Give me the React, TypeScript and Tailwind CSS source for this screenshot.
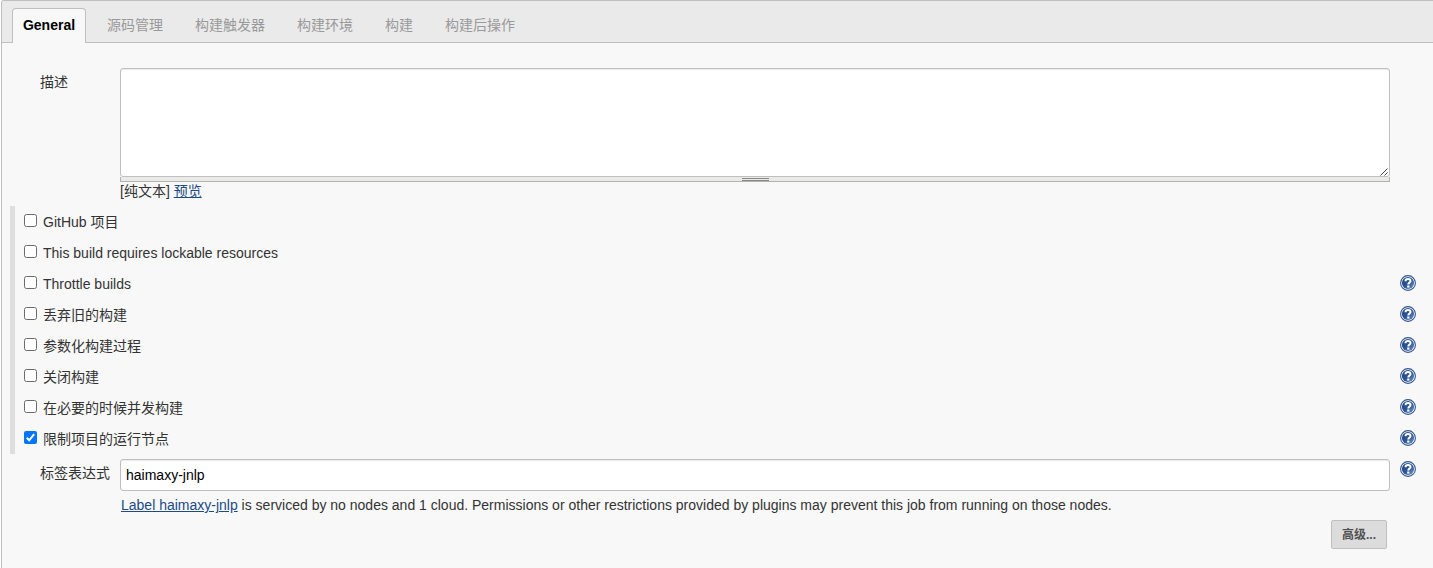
const FONT = "font-['Liberation_Sans','Noto_Sans_CJK_SC',sans-serif]";

const tabs = ["源码管理", "构建触发器", "构建环境", "构建", "构建后操作"];

const options = [
  { label: "GitHub 项目", help: false, checked: false },
  { label: "This build requires lockable resources", help: false, checked: false },
  { label: "Throttle builds", help: true, checked: false },
  { label: "丢弃旧的构建", help: true, checked: false },
  { label: "参数化构建过程", help: true, checked: false },
  { label: "关闭构建", help: true, checked: false },
  { label: "在必要的时候并发构建", help: true, checked: false },
  { label: "限制项目的运行节点", help: true, checked: true },
];

function HelpIcon() {
  return (
    <svg width="16" height="16" viewBox="0 0 16 16" className="block shrink-0">
      <defs>
        <linearGradient id="help" x1="0" y1="0" x2="1" y2="1">
          <stop offset="0" stopColor="#1f4480" />
          <stop offset="0.5" stopColor="#2d5593" />
          <stop offset="1" stopColor="#6f94c4" />
        </linearGradient>
      </defs>
      <circle cx="8" cy="8" r="7.4" fill="#fff" stroke="#2f5590" strokeWidth="1.1" />
      <circle cx="8" cy="8" r="6.1" fill="url(#help)" />
      <path d="M5.5 6.2C5.5 4.6 6.5 3.9 8 3.9c1.5 0 2.5.7 2.5 2 0 1.6-2.2 1.8-2.2 3.6" fill="none" stroke="#fff" strokeWidth="2" />
      <rect x="7.2" y="10.5" width="2.2" height="2.1" fill="#fff" />
    </svg>
  );
}

function Checkbox({ checked }: { checked: boolean }) {
  return checked ? (
    <span className="block size-[13px] shrink-0 rounded-[2px] bg-[#0075ff]">
      <svg width="13" height="13" viewBox="0 0 13 13" className="block">
        <path d="M2.8 6.8 5.2 9.3 10.2 3.2" fill="none" stroke="#fff" strokeWidth="2" />
      </svg>
    </span>
  ) : (
    <span className="block size-[13px] shrink-0 rounded-[2.5px] border border-[#6b6b6b] bg-white" />
  );
}

export default function App() {
  return (
    <div className={`${FONT} h-[568px] overflow-hidden bg-white pl-px text-sm text-[#333]`}>
      <div className="h-full rounded-tl-[3px] border-t border-l border-[#bfbfbf] bg-[#f8f8f8]">
        <div className="flex h-[42px] items-end rounded-tl-[2px] border-b border-[#bfbfbf] bg-[#eaeaea] pl-[10px]">
          <div className="-mb-px h-[35px] w-[74px] rounded-t-[4px] border border-b-0 border-[#bfbfbf] bg-[#f8f8f8] text-center leading-[33px] font-bold text-black">
            General
          </div>
          <div className="flex h-[34px] gap-8 pl-[21px] leading-[35px] text-[#999]">
            {tabs.map((t) => (
              <div key={t}>{t}</div>
            ))}
          </div>
        </div>

        <div className="flex pt-[25px] pr-[43px] pl-[38px]">
          <div className="w-20 pt-1 leading-5">描述</div>
          <div className="flex-1">
            <div className="flex h-[109px] items-end justify-end rounded-[3px] border border-[#bfbfbf] bg-white shadow-[inset_0_1px_1px_rgba(0,0,0,0.08)]">
              <svg width="9" height="9" viewBox="0 0 9 9">
                <path d="M0.5 8.5 7.5 1.5M4.5 8.5 7.5 5.5" stroke="#444" strokeWidth="1" fill="none" />
              </svg>
            </div>
            <div className="flex h-[5px] flex-col items-center gap-px border border-t-0 border-[#b3b3ad] bg-[#eaeaea] pt-px">
              <div className="h-px w-[27px] shrink-0 bg-[#888]" />
              <div className="h-px w-[27px] shrink-0 bg-[#888]" />
            </div>
            <div className="h-6 leading-[19px]">
              [纯文本] <a className="text-[#204a87] underline">预览</a>
            </div>
          </div>
        </div>

        <div className="ml-2 border-l-[5px] border-[#dedede] pr-[17px] pl-[9px]">
          {options.map((o) => (
            <div key={o.label} className="flex h-[31px] items-start pt-2">
              <Checkbox checked={o.checked} />
              <span className="flex-1 pl-1.5 leading-4">{o.label}</span>
              {o.help && (
                <div className="-mt-px">
                  <HelpIcon />
                </div>
              )}
            </div>
          ))}
        </div>

        <div className="flex pt-[5px] pr-[17px] pl-[38px]">
          <div className="w-20 pt-1 leading-5">标签表达式</div>
          <div className="h-8 flex-1 rounded-[3px] border border-[#bfbfbf] bg-white pl-[5px] leading-[31px] text-black shadow-[inset_0_1px_1px_rgba(0,0,0,0.08)]">
            haimaxy-jnlp
          </div>
          <div className="pt-[2px] pl-[10px]">
            <HelpIcon />
          </div>
        </div>
        <div className="pt-1 pb-px pl-[119px] leading-5">
          <a className="text-[#204a87] underline">Label haimaxy-jnlp</a> is serviced by no nodes and 1 cloud.
          Permissions or other restrictions provided by plugins may prevent this job from running on those nodes.
        </div>
        <div className="flex justify-end pt-1 pr-[46px]">
          <button className="h-[29px] w-14 rounded-[2px] border border-[#c0c0c0] bg-[#dcdcdc] text-xs leading-[26px] font-bold text-[#505050]">
            高级...
          </button>
        </div>
      </div>
    </div>
  );
}
